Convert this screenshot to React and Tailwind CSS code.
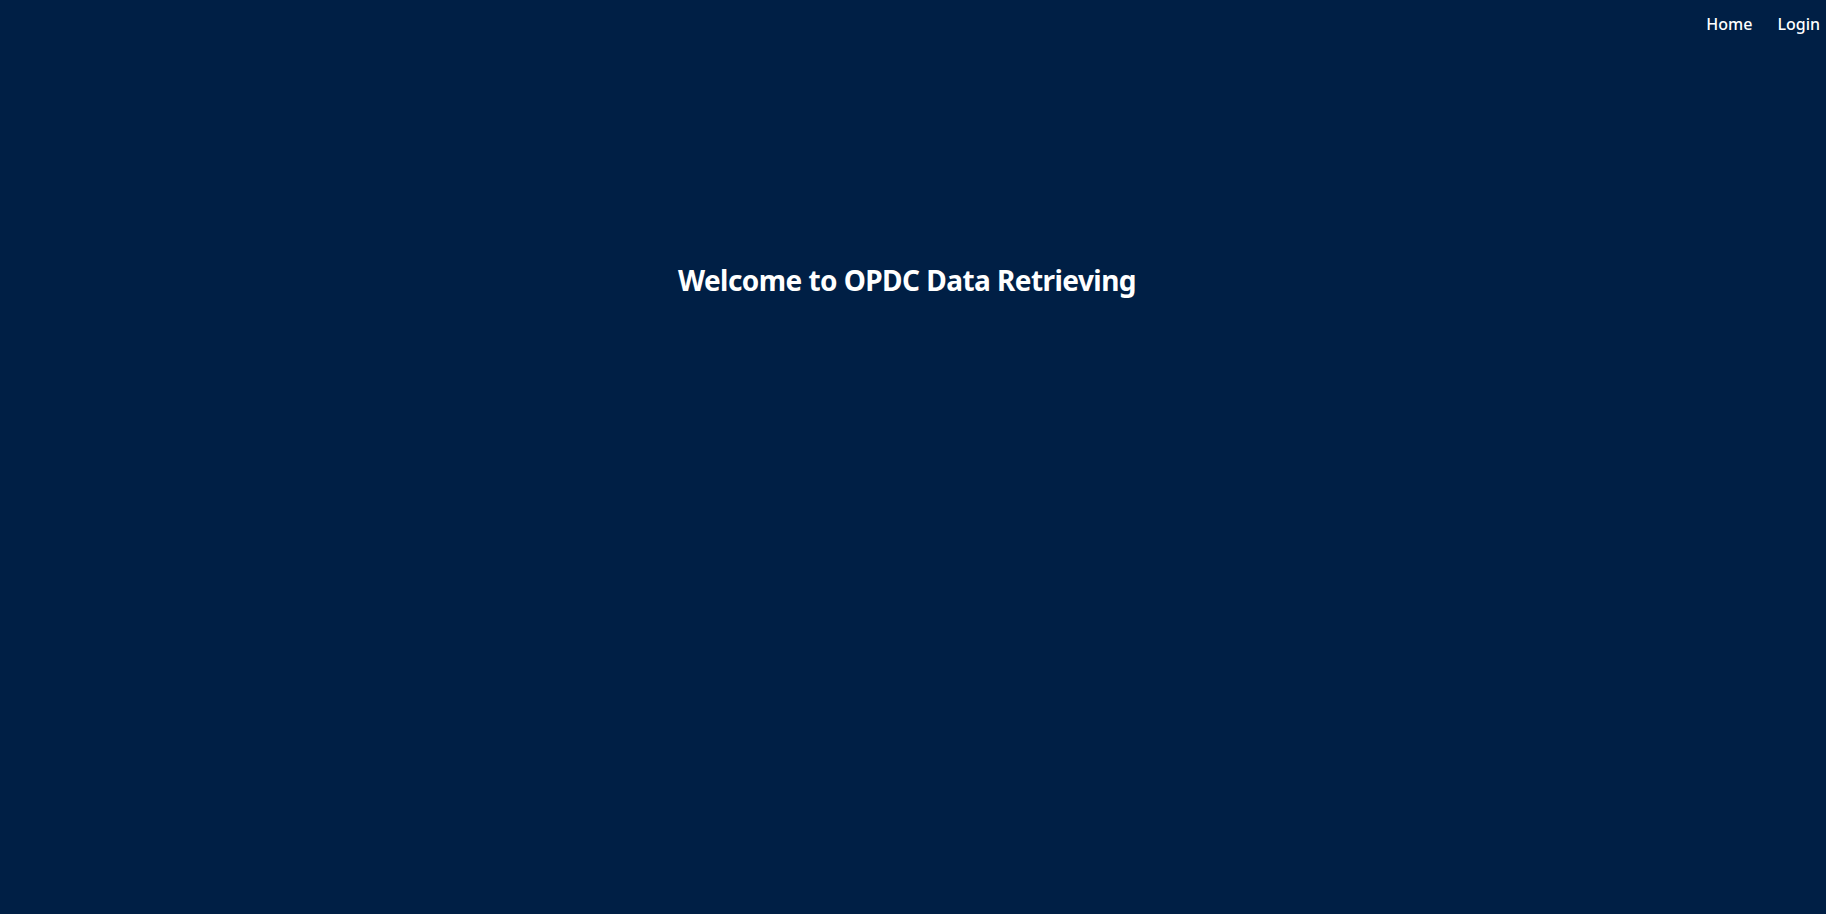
export default function App() {
  return (
    <div className="min-h-screen w-full bg-[#001f45] text-white" style={{ fontFamily: '"Noto Sans", "Open Sans", sans-serif' }}>
      <nav className="flex justify-end items-center gap-[25px] pr-[6px] pt-[12px]">
        <a className="text-[16px] leading-[24px] font-medium">Home</a>
        <a className="text-[16px] leading-[24px] font-medium">Login</a>
      </nav>
      <div className="flex justify-center pt-[226px] pr-[12px]">
        <h1 className="text-[28px] leading-[36px] font-bold tracking-[-0.55px]">Welcome to OPDC Data Retrieving</h1>
      </div>
    </div>
  );
}
